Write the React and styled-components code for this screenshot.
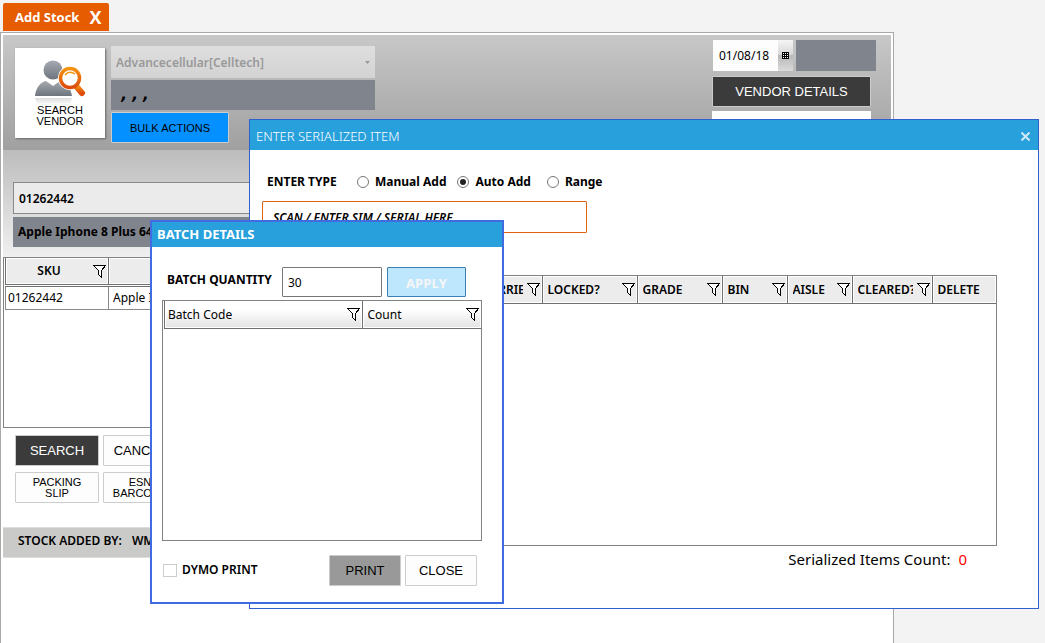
import React, { useState } from "react";
import styled, { createGlobalStyle, css } from "styled-components";

const GlobalStyle = createGlobalStyle`
  * {
    box-sizing: border-box;
  }

  body {
    margin: 0;
    background: #f3f3f3;
    color: #000;
    font-family: "Noto Sans", "Open Sans", sans-serif;
    font-size: 12px;
    line-height: 16px;
  }

  button, input, select {
    margin: 0;
    color: inherit;
    font-family: inherit;
    font-size: inherit;
  }
`;

const Page = styled.div`
  position: relative;
  display: flex;
  flex-direction: column;
  min-height: 100vh;
  padding: 3px 151px 0 0;
`;

const TabBar = styled.nav`
  display: flex;
  height: 29px;
  padding-left: 3px;
`;

const Tab = styled.div`
  display: flex;
  align-items: center;
  gap: 10px;
  height: 28px;
  padding: 0 8px 0 12px;
  border-radius: 2px 2px 0 0;
  background: #e65c00;
  color: #fff;
  font-family: "Open Sans", sans-serif;
  font-size: 13px;
  font-weight: 700;
`;

const TabClose = styled.button`
  padding: 0;
  border: 0;
  background: none;
  font-size: 18px;
  line-height: 24px;
  font-weight: 700;
`;

const Panel = styled.main`
  flex: 1;
  padding: 2px;
  border: 1px solid #a9a9a9;
  border-bottom: 0;
  background: #fff;
`;

const Header = styled.header`
  display: flex;
  align-items: flex-start;
  height: 115px;
  padding: 5px 15px 0 12px;
  background: linear-gradient(#c8c8c8, #a0a0a0);
`;

const VendorSearch = styled.button`
  display: flex;
  flex-direction: column;
  align-items: center;
  width: 90px;
  height: 90px;
  margin: 8px 6px 0 0;
  padding: 11px 0 0;
  border: 0;
  background: #fff;
  box-shadow: 1px 1px 2px #666;
  font-family: "Liberation Sans", sans-serif;
  font-size: 11px;
  line-height: 11px;
`;

const VendorColumn = styled.div`
  display: flex;
  flex-direction: column;
  align-items: flex-start;
  gap: 2px;
  width: 264px;
  padding-top: 6px;
`;

const VendorSelect = styled.div`
  position: relative;
  width: 100%;
  height: 32px;
  background: linear-gradient(#dedede, #d3d3d3);
  color: #999;

  select {
    width: 100%;
    height: 100%;
    padding: 0 5px;
    border: 0;
    background: none;
    appearance: none;
    font-weight: 600;
    opacity: 1;
  }

  svg {
    position: absolute;
    top: 15px;
    right: 5px;
  }
`;

const GreyBox = styled.div`
  height: ${(p) => p.$height || 30}px;
  width: ${(p) => p.$width || "100%"};
  padding: 7px 5px;
  background: #80848c;
  font-weight: 700;
  white-space: pre;
`;

const AddressBox = styled(GreyBox)`
  font-family: "DejaVu Sans", sans-serif;
  font-size: 15px;
  font-style: italic;
`;

const Button = styled.button`
  flex: none;
  width: ${(p) => p.$width}px;
  height: 31px;
  padding: 1px 0 0;
  border: 1px solid #ccc;
  border-radius: 1px;
  background: #fdfdfd;
  font-family: "Liberation Sans", sans-serif;
  font-size: ${(p) => (p.$small ? 11 : 13)}px;
  line-height: ${(p) => (p.$small ? 11 : 16)}px;

  ${(p) => p.$tone === "dark" && css`
    background: #3b3b3b;
    color: #fff;
  `}
  ${(p) => p.$tone === "blue" && css`
    background: #0590ff;
  `}
  ${(p) => p.$tone === "grey" && css`
    background: #999;
  `}
  ${(p) => p.$tone === "light" && css`
    border-color: #3c7fb1;
    background: #bee6fd;
    color: #f6f6f6;
    font-family: "Open Sans", sans-serif;
    font-weight: 700;
  `}
`;

const DateColumn = styled.div`
  display: flex;
  flex-direction: column;
  gap: 4px;
  width: 164px;
  margin-left: auto;
`;

const DateRow = styled.div`
  display: flex;
  gap: 3px;
  height: 32px;
  padding-left: 1px;
`;

const DateField = styled.div`
  display: flex;
  width: 80px;
  height: 31px;
  background: #fdfdfd;

  input {
    width: 65px;
    padding: 0 0 0 6px;
    border: 0;
    background: none;
  }

  button {
    display: grid;
    place-items: center;
    width: 15px;
    padding: 0;
    border: 0;
    background: linear-gradient(#f5f5f5, #d5d5d5 50%, #b8b8b8 50%, #dadada);
  }
`;

const DateNote = styled.div`
  width: 159px;
  height: 30px;
  background: #fff;
`;

const ItemSection = styled.section`
  height: 107px;
  padding: 32px 10px 0;
  background: linear-gradient(#bcbcbc, #f0f0f0);
`;

const SkuInput = styled.input`
  display: block;
  width: 100%;
  height: 32px;
  margin-bottom: 3px;
  padding: 0 5px;
  border: 1px solid #8a8a8a;
  background: #ebebeb;
  font-weight: 600;
`;

const GridFrame = styled.div`
  height: ${(p) => p.$height}px;
  padding-left: 1px;
  border: 1px solid #828282;
  background: #fff;
`;

const Table = styled.table`
  width: 100%;
  border-collapse: collapse;
  table-layout: fixed;

  th {
    height: 27px;
    padding: 1px 2px 0 5px;
    border: 1px solid #707070;
    border-width: 0 1px 1px;
    background: ${(p) => (p.$fade ? "linear-gradient(#fff 30%, #e2e2e2)" : "#ececec")};
    box-shadow: inset 0 0 0 1px #fff;
    font-weight: ${(p) => (p.$fade ? 400 : 600)};
    text-align: left;
  }

  th:first-child {
    padding-left: 3px;
  }

  th:last-child {
    border-right: 0;
  }

  td {
    height: 24px;
    padding: 0 4px 0 2px;
    border: 1px solid #8a8a8a;
    border-top: 3px double #707070;
    white-space: nowrap;
  }

  td + td {
    padding-left: 4px;
  }
`;

const HeadCell = styled.div`
  display: flex;
  align-items: center;
  justify-content: space-between;
  gap: 4px;

  span {
    flex: 1;
    overflow: hidden;
    white-space: nowrap;
    text-align: ${(p) => (p.$center ? "center" : "left")};
  }

  svg {
    flex: none;
  }
`;

const ActionGrid = styled.div`
  display: grid;
  grid-template-columns: 84px 74px;
  gap: 6px 4px;
  padding: 7px 12px 24px;
`;

const FooterBar = styled.footer`
  display: flex;
  gap: 10px;
  height: 31px;
  padding: 5px 15px;
  border: 1px solid #ddd;
  border-width: 1px 0;
  background: #cacac9;
  font-weight: 600;
`;

const Dialog = styled.section`
  position: absolute;
  top: 119px;
  left: 249px;
  right: 6px;
  min-height: 490px;
  border: 1px solid #2f60cc;
  background: #fff;
`;

const DialogTitle = styled.header`
  display: flex;
  align-items: center;
  justify-content: space-between;
  height: 30px;
  padding: 2px 8px 0 6px;
  background: #27a0dc;
  color: #fff;
  font-family: "Noto Sans", sans-serif;
  font-size: 13px;
  font-weight: 300;

  button {
    display: flex;
    padding: 0;
    border: 0;
    background: none;
    color: #cfeaf7;
  }
`;

const DialogBody = styled.div`
  padding: 22px 41px 0 12px;
`;

const RadioRow = styled.div`
  display: flex;
  align-items: center;
  height: 20px;
  padding-left: 5px;
  font-weight: 700;
`;

const RadioTitle = styled.span`
  width: 74px;
`;

const RadioLabel = styled.label`
  display: flex;
  align-items: center;
  gap: 6px;
  margin-left: ${(p) => p.$gap}px;

  input {
    display: grid;
    place-items: center;
    width: 12px;
    height: 12px;
    border: 1px solid #777;
    border-radius: 50%;
    background: #fff;
    appearance: none;
  }

  input:checked::before {
    width: 6px;
    height: 6px;
    border-radius: 50%;
    background: #222;
    content: "";
  }
`;

const ScanInput = styled.input`
  display: block;
  width: 325px;
  height: 32px;
  margin: 9px 0 42px;
  padding: 0 10px;
  border: 1px solid #e0640f;
  border-radius: 1px;
  background: #fff;

  &::placeholder {
    color: #000;
    font-style: italic;
    font-weight: 600;
  }
`;

const CountLine = styled.p`
  display: flex;
  justify-content: flex-end;
  gap: 8px;
  margin: 3px 30px 0 0;
  font-size: 15px;
  line-height: 20px;

  b {
    color: #f00;
    font-weight: 400;
  }
`;

const BatchDialog = styled.section`
  position: absolute;
  top: 220px;
  left: 150px;
  width: 354px;
  min-height: 384px;
  border: 2px solid #416be1;
  background: #fff;
`;

const BatchTitle = styled.header`
  height: 25px;
  padding: 4px 5px;
  background: #27a0dc;
  color: #fff;
  font-size: 13px;
  font-weight: 700;
`;

const BatchBody = styled.div`
  padding: 20px 20px 0 10px;
`;

const QuantityRow = styled.div`
  display: flex;
  align-items: center;
  gap: 5px;
  height: 30px;
  margin-bottom: 3px;
  padding-left: 5px;

  label {
    width: 110px;
    margin-bottom: 5px;
    font-weight: 700;
    white-space: nowrap;
  }

  input {
    width: 100px;
    height: 30px;
    padding: 0 5px;
    border: 1px solid #777;
    border-radius: 1px;
  }

  button {
    height: 30px;
  }
`;

const BatchActions = styled.div`
  display: flex;
  gap: 4px;
  padding: 14px 5px 0 1px;

  label {
    display: flex;
    align-items: center;
    gap: 5px;
    height: 30px;
    margin-right: auto;
    font-weight: 600;
  }

  input {
    width: 14px;
    height: 13px;
    border: 1px solid #ccc;
    background: #fff;
    appearance: none;
  }

  input:checked {
    background: #999;
  }
`;

const FilterIcon = () => (
  <svg width="13" height="13" viewBox="0 0 13 13" fill="#fff" stroke="#000" shapeRendering="crispEdges">
    <path d="M0.5 0.5H12.5L8.5 5.5V12.5L5.5 9.5V5.5Z" />
  </svg>
);

const CloseIcon = () => (
  <svg width="9" height="9" viewBox="0 0 9 9" stroke="currentColor" strokeWidth="2">
    <path d="M0.500 0.500L8.500 8.500M8.500 0.500L0.500 8.500" />
  </svg>
);

const CalendarIcon = () => (
  <svg width="7" height="7" viewBox="0 0 7 7" shapeRendering="crispEdges">
    <path fill="#000" d="M0 0H7V7H0z" />
    <path fill="#fff" d="M1 1h1v1H1zM3 1h1v1H3zM5 1h1v1H5zM1 3h1v1H1zM3 3h1v1H3zM5 3h1v1H5zM1 5h1v1H1zM3 5h1v1H3zM5 5h1v1H5z" />
  </svg>
);

const SearchUserIcon = () => (
  <svg width="52" height="46" viewBox="0 0 52 46">
    <defs>
      <linearGradient id="user" x2="0" y2="1">
        <stop stopColor="#a6abb2" />
        <stop offset="1" stopColor="#6e747d" />
      </linearGradient>
      <linearGradient id="lens" x2="0" y2="1">
        <stop stopColor="#f59210" />
        <stop offset="1" stopColor="#dc4a0c" />
      </linearGradient>
      <linearGradient id="mirror" x2="0" y2="1">
        <stop stopColor="#ddd" />
        <stop offset="1" stopColor="#fff" />
      </linearGradient>
    </defs>
    <path fill="url(#mirror)" d="M1 39H38L36 46H3z" />
    <circle cx="19" cy="11" r="9.500" fill="url(#user)" />
    <path fill="url(#user)" d="M1 37C2 28 7 23 12 22L19 27L26 22C32 24 37 29 38 37Z" />
    <circle cx="36" cy="19" r="12" fill="#fff" />
    <path stroke="#fff" strokeWidth="9" d="M42 27L47 33" />
    <path stroke="url(#lens)" strokeWidth="6" strokeLinecap="round" d="M42 27L48 34" />
    <circle cx="36" cy="19" r="9.500" fill="#fff" stroke="url(#lens)" strokeWidth="3.500" />
    <path fill="none" stroke="#f59210" strokeWidth="1.500" d="M31 16Q35 11 41 15" />
  </svg>
);

const batchColumns = [
  { title: "Batch Code", filter: true },
  { title: "Count", width: 119, filter: true },
];

const itemColumns = [
  { title: "" },
  { title: "CARRIER", width: 65, filter: true },
  { title: "LOCKED?", width: 95, filter: true },
  { title: "GRADE", width: 85, filter: true },
  { title: "BIN", width: 65, filter: true },
  { title: "AISLE", width: 65, filter: true },
  { title: "CLEARED?", width: 80, filter: true },
  { title: "DELETE", width: 64 },
];

const stockColumns = [
  { title: "SKU", width: 103, filter: true, center: true },
  { title: "" },
];

const DataGrid = ({ columns, rows = [], height, fade }) => (
  <GridFrame $height={height}>
    <Table $fade={fade}>
      <colgroup>
        {columns.map((col, i) => (
          <col key={i} width={col.width} />
        ))}
      </colgroup>
      <thead>
        <tr>
          {columns.map((col, i) => (
            <th key={i}>
              <HeadCell $center={col.center}>
                <span>{col.title}</span>
                {col.filter && <FilterIcon />}
              </HeadCell>
            </th>
          ))}
        </tr>
      </thead>
      <tbody>
        {rows.map((row) => (
          <tr key={row[0]}>
            {row.map((cell) => (
              <td key={cell}>{cell}</td>
            ))}
          </tr>
        ))}
      </tbody>
    </Table>
  </GridFrame>
);

const App = () => {
  const [enterType, setEnterType] = useState("Auto Add");
  const [quantity, setQuantity] = useState("30");
  const [sku, setSku] = useState("01262442");
  const [date, setDate] = useState("01/08/18");

  return (
    <Page>
      <GlobalStyle />
      <TabBar>
        <Tab>
          Add Stock
          <TabClose aria-label="Close tab">X</TabClose>
        </Tab>
      </TabBar>

      <Panel>
        <Header>
          <VendorSearch>
            <SearchUserIcon />
            <span>SEARCH</span>
            <span>VENDOR</span>
          </VendorSearch>
          <VendorColumn>
            <VendorSelect>
              <select aria-label="Vendor" disabled>
                <option>Advancecellular[Celltech]</option>
              </select>
              <svg width="5" height="3" viewBox="0 0 5 3" fill="#999">
                <path d="M0 0H5L2.500 3Z" />
              </svg>
            </VendorSelect>
            <AddressBox> , , ,</AddressBox>
            <Button $tone="blue" $width={118} $small>BULK ACTIONS</Button>
          </VendorColumn>
          <DateColumn>
            <DateRow>
              <DateField>
                <input aria-label="Date" value={date} onChange={(e) => setDate(e.target.value)} />
                <button aria-label="Pick date"><CalendarIcon /></button>
              </DateField>
              <GreyBox $width="80px" $height={31} />
            </DateRow>
            <Button $tone="dark" $width={159}>VENDOR DETAILS</Button>
            <DateNote />
          </DateColumn>
        </Header>

        <ItemSection>
          <SkuInput aria-label="SKU" value={sku} onChange={(e) => setSku(e.target.value)} />
          <GreyBox>Apple Iphone 8 Plus 64GB</GreyBox>
        </ItemSection>

        <DataGrid columns={stockColumns} rows={[["01262442", "Apple Iphone 8 Plus 64GB"]]} height={171} />

        <ActionGrid>
          <Button $tone="dark" $width={84}>SEARCH</Button>
          <Button $width={74}>CANCEL</Button>
          <Button $width={84} $small>PACKING<br />SLIP</Button>
          <Button $width={74} $small>ESN<br />BARCODE</Button>
        </ActionGrid>

        <FooterBar>
          <span>STOCK ADDED BY:</span>
          <span>WM</span>
        </FooterBar>
      </Panel>

      <Dialog>
        <DialogTitle>
          ENTER SERIALIZED ITEM
          <button aria-label="Close"><CloseIcon /></button>
        </DialogTitle>
        <DialogBody>
          <RadioRow>
            <RadioTitle>ENTER TYPE</RadioTitle>
            {["Manual Add", "Auto Add", "Range"].map((type) => (
              <RadioLabel key={type} $gap={type === "Auto Add" ? 11 : 16}>
                <input
                  type="radio"
                  name="enterType"
                  checked={enterType === type}
                  onChange={() => setEnterType(type)}
                />
                {type}
              </RadioLabel>
            ))}
          </RadioRow>
          <ScanInput aria-label="Serial" placeholder="SCAN / ENTER SIM / SERIAL HERE" />
          <DataGrid columns={itemColumns} height={271} />
          <CountLine>
            Serialized Items Count: <b>0</b>
          </CountLine>
        </DialogBody>
      </Dialog>

      <BatchDialog>
        <BatchTitle>BATCH DETAILS</BatchTitle>
        <BatchBody>
          <QuantityRow>
            <label htmlFor="quantity">BATCH QUANTITY</label>
            <input id="quantity" value={quantity} onChange={(e) => setQuantity(e.target.value)} />
            <Button $tone="light" $width={79}>APPLY</Button>
          </QuantityRow>
          <DataGrid columns={batchColumns} height={241} fade />
          <BatchActions>
            <label>
              <input type="checkbox" />
              DYMO PRINT
            </label>
            <Button $tone="grey" $width={72}>PRINT</Button>
            <Button $width={72}>CLOSE</Button>
          </BatchActions>
        </BatchBody>
      </BatchDialog>
    </Page>
  );
};

export default App;
